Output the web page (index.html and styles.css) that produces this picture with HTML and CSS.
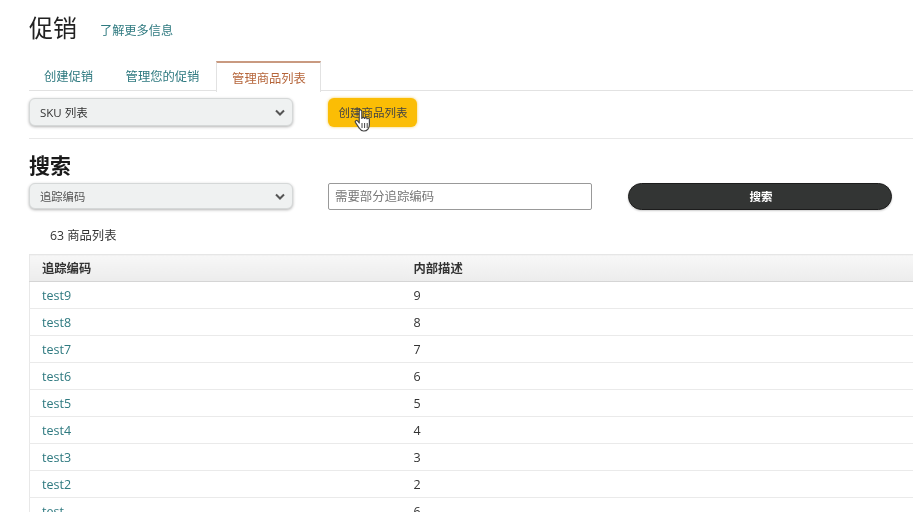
FILE: index.html
```
<!DOCTYPE html>
<html lang="zh-CN">
<head>
<meta charset="utf-8">
<title>促销</title>
<link rel="stylesheet" href="styles.css">
</head>
<body>
<header class="title-row">
  <h1>促销</h1>
  <a class="learn" href="#">了解更多信息</a>
</header>
<nav class="tabs">
  <a class="tab" href="#">创建促销</a>
  <a class="tab" href="#">管理您的促销</a>
  <a class="tab active" href="#">管理商品列表</a>
</nav>
<section class="toolbar">
  <div class="select">
    <span>SKU 列表</span>
    <svg class="chev" viewBox="0 0 10 7"><path d="M1 1.500 5 5.500 9 1.500" fill="none" stroke="#555" stroke-width="2"/></svg>
  </div>
  <button class="primary">创建商品列表
    <svg class="cursor" viewBox="0 0 18 24"><path d="M5.200 2.200c0-1.600 2.600-1.600 2.600 0v7.200c.2-1.300 2.500-1.300 2.700.1.300-1.200 2.400-1.100 2.600.3.400-.9 2.200-.7 2.300.7v5.200c0 3.200-2 6.300-5.500 6.300H9.500c-2 0-3.100-1-4.100-2.700L1.400 13.400c-.8-1.500 1.100-2.600 2.200-1.400l1.600 2z" fill="#fff" stroke="#444" stroke-width="1.200" stroke-linejoin="round"/><path d="M8 14v5M10.600 14v5M13.200 14v5" stroke="#444" stroke-width="1" fill="none"/></svg>
  </button>
</section>
<section class="search">
  <h2>搜索</h2>
  <div class="search-row">
    <div class="select small">
      <span>追踪编码</span>
      <svg class="chev" viewBox="0 0 10 7"><path d="M1 1.500 5 5.500 9 1.500" fill="none" stroke="#555" stroke-width="2"/></svg>
    </div>
    <input class="code" type="text" placeholder="需要部分追踪编码">
    <button class="dark">搜索</button>
  </div>
</section>
<p class="count">63 商品列表</p>
<table class="list">
  <thead>
    <tr><th class="c1">追踪编码</th><th>内部描述</th></tr>
  </thead>
  <tbody>
    <tr><td><a href="#">test9</a></td><td>9</td></tr>
    <tr><td><a href="#">test8</a></td><td>8</td></tr>
    <tr><td><a href="#">test7</a></td><td>7</td></tr>
    <tr><td><a href="#">test6</a></td><td>6</td></tr>
    <tr><td><a href="#">test5</a></td><td>5</td></tr>
    <tr><td><a href="#">test4</a></td><td>4</td></tr>
    <tr><td><a href="#">test3</a></td><td>3</td></tr>
    <tr><td><a href="#">test2</a></td><td>2</td></tr>
    <tr><td><a href="#">test</a></td><td>6</td></tr>
  </tbody>
</table>
</body>
</html>
```
FILE: styles.css
```
* { box-sizing: border-box; }
html, body { height: 512px; overflow: hidden; }
body {
  margin: 0;
  padding: 11px 0 0 29px;
  background: #fff;
  color: #333;
  font-family: "Open Sans", "Noto Sans CJK SC", sans-serif;
  font-size: 12px;
  filter: blur(0.45px);
}
a { color: #2f7a80; text-decoration: none; }
.title-row { display: flex; align-items: center; height: 34px; gap: 23px; }
h1 { margin: 0; font-size: 24px; font-weight: 400; color: #222; line-height: 30px; }
.learn { font-size: 12.2px; margin-top: 4px; }
.tabs {
  display: flex;
  height: 46px;
  padding-top: 16px;
  border-bottom: 1px solid #e2e2e2;
}
.tab {
  display: flex;
  align-items: center;
  justify-content: center;
  height: 30px;
  font-size: 12.3px;
}
.tab:nth-child(1) { width: 79px; }
.tab:nth-child(2) { width: 108px; padding-left: 1px; }
.tab.active {
  width: 105px;
  height: 31px;
  padding-left: 1px;
  color: #b5653a;
  background: #fff;
  border: 1px solid #e2e2e2;
  border-top: 2px solid #c99a80;
  border-bottom: 0;
}
.toolbar {
  display: flex;
  align-items: flex-start;
  gap: 35px;
  height: 48px;
  padding-top: 7px;
  border-bottom: 1px solid #e8e8e8;
}
.select {
  display: flex;
  align-items: center;
  justify-content: space-between;
  width: 264px;
  height: 28px;
  padding: 0 7px 0 10px;
  background: #eff1f1;
  border: 1px solid #d5d8d8;
  border-radius: 6px;
  box-shadow: 0 1px 3px rgba(0, 0, 0, .3);
  color: #333;
  font-size: 11.5px;
}
.select.small { height: 26px; color: #555; font-size: 11.3px; }
.chev { width: 10px; height: 7px; }
.primary {
  position: relative;
  width: 89px;
  height: 29px;
  padding: 0 0 2px 1px;
  border: 0;
  border-radius: 6px;
  background: #fbbd05;
  box-shadow: 0 0 3px rgba(240, 190, 40, .8);
  color: #444;
  font: 11.500px "Open Sans", "Noto Sans CJK SC", sans-serif;
}
.cursor {
  position: absolute;
  left: 26px;
  top: 11px;
  width: 18px;
  height: 24px;
}
.search { padding-top: 12px; }
h2 {
  margin: 0;
  font-size: 21px;
  font-weight: 700;
  line-height: 28px;
  color: #1a1a1a;
}
.search-row { display: flex; align-items: flex-start; height: 27px; margin-top: 4px; }
.code {
  width: 264px;
  height: 27px;
  margin-left: 35px;
  padding: 0 6px;
  border: 1px solid #999;
  border-radius: 2px;
  background: #fff;
  font: 12.400px "Open Sans", "Noto Sans CJK SC", sans-serif;
}
.code::placeholder { color: #777; opacity: 1; }
.dark {
  width: 264px;
  height: 27px;
  margin-left: 36px;
  padding: 0 0 2px 2px;
  border: 1px solid #1c1c1c;
  border-radius: 14px;
  background: #333534;
  box-shadow: 0 1px 2px rgba(0, 0, 0, .2);
  color: #fff;
  font: 700 11.500px "Open Sans", "Noto Sans CJK SC", sans-serif;
}
.count { margin: 0; padding: 17px 0 0 21px; height: 44px; line-height: 18px; color: #333; font-size: 12.300px; }
.list {
  width: 884px;
  border-collapse: collapse;
  border-left: 1px solid #e8e8e8;
  table-layout: fixed;
}
.list th {
  height: 27px;
  padding: 0 0 0 12px;
  text-align: left;
  font-weight: 600;
  font-size: 12.300px;
  background: linear-gradient(#f7f7f7, #ececec);
  border-top: 1px solid #e6e6e6;
  border-bottom: 1px solid #d5d5d5;
  color: #333;
}
.list th.c1 { width: 372px; }
.list td {
  height: 27px;
  padding: 0 0 0 12px;
  border-bottom: 1px solid #eaeaea;
  font-size: 12.500px;
}
```
